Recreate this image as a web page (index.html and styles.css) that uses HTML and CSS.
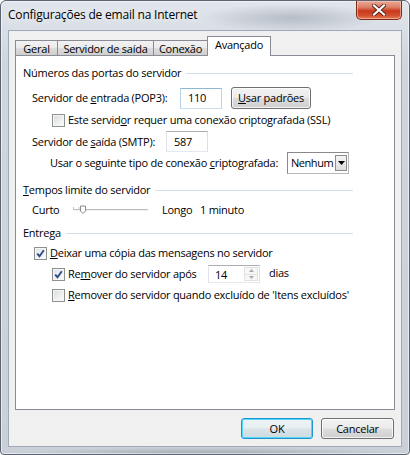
FILE: index.html
```html
<!DOCTYPE html>
<html lang="pt">
<head>
<meta charset="utf-8">
<title>Configurações de email na Internet</title>
<link rel="stylesheet" href="styles.css">
</head>
<body>
<div class="window">
  <div class="titlebar">
    <span class="title">Configurações de email na Internet</span>
    <div class="close">
      <svg width="14" height="12" viewBox="0 0 14 12">
        <path d="M2 1.5 L12 10.5 M12 1.5 L2 10.5" stroke="#5a2016" stroke-width="4" stroke-linecap="square"/>
        <path d="M2 1.5 L12 10.5 M12 1.5 L2 10.5" stroke="#ffffff" stroke-width="2.2" stroke-linecap="square"/>
      </svg>
    </div>
  </div>
  <div class="client">
    <div class="tabs">
      <div class="tab t1">Geral</div>
      <div class="tab t2">Servidor de saída</div>
      <div class="tab t3">Conexão</div>
      <div class="tab t4 active">Avançado</div>
    </div>
    <div class="panel">
      <div class="ghead gh1"><span>Números das portas do servidor</span><i class="rule"></i></div>

      <div class="row r-pop">
        <span class="lbl w-pop">Servidor de <u>e</u>ntrada (POP3):</span>
        <span class="field f-pop focus">110</span>
        <span class="btn b-def"><span><u>U</u>sar padrões</span></span>
      </div>

      <div class="row r-ssl">
        <span class="cb"></span>
        <span class="cbl">Este servid<u>o</u>r requer uma conexão criptografada (SSL)</span>
      </div>

      <div class="row r-smtp">
        <span class="lbl w-smtp">Servidor de <u>s</u>aída (SMTP):</span>
        <span class="field f-smtp">587</span>
      </div>

      <div class="row r-sel">
        <span class="lbl w-sel">Usar o seguinte tipo de conexão <u>c</u>riptografada:</span>
        <span class="select">
          <span class="sel-text">Nenhum</span>
          <span class="sel-btn">
            <svg width="7" height="4" viewBox="0 0 7 4"><path d="M0 0 H7 L3.5 4 Z" fill="#000"/></svg>
          </span>
        </span>
      </div>

      <div class="ghead gh2"><span><u>T</u>empos limite do servidor</span><i class="rule"></i></div>

      <div class="row r-slider">
        <span class="lbl w-curto">Curto</span>
        <span class="slider">
          <svg width="75" height="14" viewBox="0 0 75 14">
            <path d="M0.5 4 V6.5 H75" stroke="#bdbdbd" stroke-width="1" fill="none"/>
            <path d="M1 7.5 H75" stroke="#f2f2f2" stroke-width="1"/>
            <path d="M7.5 3 H12.5 V8 L10 10.5 L7.5 8 Z" fill="#fdfdfd" stroke="#8c8c8c" stroke-width="1"/>
            <path d="M6 4 V7" stroke="#c9c9c9" stroke-width="1"/>
          </svg>
        </span>
        <span class="lbl w-longo">Longo</span>
        <span class="lbl">1 minuto</span>
      </div>

      <div class="ghead gh3"><span>Entrega</span><i class="rule"></i></div>

      <div class="row r-deixar">
        <span class="cb checked">
          <svg width="9" height="9" viewBox="0 0 9 9"><path d="M1.2 4.6 L3.5 7.2 L7.8 1.2" stroke="#2e4a84" stroke-width="1.9" fill="none"/></svg>
        </span>
        <span class="cbl"><u>D</u>eixar uma cópia das mensagens no servidor</span>
      </div>

      <div class="row r-after">
        <span class="cb checked">
          <svg width="9" height="9" viewBox="0 0 9 9"><path d="M1.2 4.6 L3.5 7.2 L7.8 1.2" stroke="#2e4a84" stroke-width="1.9" fill="none"/></svg>
        </span>
        <span class="cbl w-after">Re<u>m</u>over do servidor após</span>
        <span class="spin">
          <span class="spin-text">14</span>
          <span class="spin-btns">
            <span class="spin-b"><svg width="5" height="3" viewBox="0 0 5 3"><path d="M0 3 H5 L2.5 0 Z" fill="#a9a9a9"/></svg></span>
            <span class="spin-b"><svg width="5" height="3" viewBox="0 0 5 3"><path d="M0 0 H5 L2.5 3 Z" fill="#a9a9a9"/></svg></span>
          </span>
        </span>
        <span class="lbl w-dias">dias</span>
      </div>

      <div class="row r-when">
        <span class="cb"></span>
        <span class="cbl"><u>R</u>emover do servidor quando excluído de 'Itens excluídos'</span>
      </div>
    </div>
    <div class="actions">
      <span class="btn b-ok">OK</span>
      <span class="btn b-cancel">Cancelar</span>
    </div>
  </div>
</div>
</body>
</html>
```
FILE: styles.css
```css
html, body {
  margin: 0;
  padding: 0;
  background: #ffffff;
}

body {
  width: 410px;
  height: 455px;
  overflow: hidden;
  font-family: "Open Sans", "Noto Sans", "DejaVu Sans", sans-serif;
  font-size: 11px;
  letter-spacing: -0.25px;
  color: #000;
}

.window {
  box-sizing: border-box;
  width: 410px;
  height: 455px;
  border: 1px solid #5b6470;
  border-radius: 6px 6px 4px 4px;
  padding: 0 7px 7px 7px;
  display: flex;
  flex-direction: column;
  background:
    radial-gradient(ellipse 90px 14px at 290px 17px, rgba(110, 120, 132, 0.35), rgba(110, 120, 132, 0) 100%),
    radial-gradient(ellipse 200px 8px at 205px 454px, rgba(120, 126, 134, 0.55), rgba(120, 126, 134, 0) 100%),
    linear-gradient(180deg, #e1e6ec 0px, #d9dfe6 29px, #cfd6de 60px, #c9d0d8 100%);
  box-shadow: inset 0 0 0 1px rgba(255, 255, 255, 0.55);
}

.titlebar {
  height: 29px;
  display: flex;
  align-items: flex-start;
  flex: none;
}

.title {
  flex: 1;
  font-size: 12px;
  letter-spacing: -0.2px;
  line-height: 16px;
  padding-top: 6px;
  color: #000;
  text-shadow: 0 0 6px rgba(255, 255, 255, 0.9);
}

.close {
  box-sizing: border-box;
  width: 46px;
  height: 19px;
  border: 1px solid #7c2a1c;
  border-top: none;
  border-radius: 0 0 5px 5px;
  background: linear-gradient(180deg, #e9a898 0%, #de7f66 35%, #c7391c 55%, #d3502f 80%, #e57a55 100%);
  box-shadow: inset 0 0 0 1px rgba(255, 210, 195, 0.55);
  display: flex;
  align-items: center;
  justify-content: center;
}

.client {
  flex: 1;
  border: 1px solid #a0aab6;
  background: #f0f0f0;
  padding: 5px 6px 0 6px;
  display: flex;
  flex-direction: column;
}

/* tabs */
.tabs {
  display: flex;
  align-items: flex-end;
  height: 20px;
  margin-bottom: -1px;
  position: relative;
  z-index: 1;
}

.tab {
  box-sizing: border-box;
  height: 15px;
  margin-bottom: 1px;
  border: 1px solid #898c95;
  border-bottom: none;
  background: linear-gradient(180deg, #f2f2f2 0%, #ebebeb 50%, #dddddd 51%, #cfcfcf 100%);
  display: flex;
  align-items: center;
  justify-content: center;
  line-height: 13px;
  padding-top: 1px;
}

.tab + .tab {
  margin-left: -1px;
}

.t1 { width: 43px; }
.t2 { width: 97px; }
.t3 { width: 55px; }
.t4 { width: 64px; }

.tab.active {
  height: 20px;
  margin-bottom: 0;
  background: #ffffff;
  align-items: flex-start;
  padding-top: 1px;
}

/* panel */
.panel {
  box-sizing: border-box;
  height: 355px;
  flex: none;
  border: 1px solid #898c95;
  background: #ffffff;
  padding: 9px 7px 0 7px;
  display: flex;
  flex-direction: column;
}

.ghead {
  width: 330px;
  height: 16px;
  display: flex;
  align-items: center;
  line-height: 16px;
}

.rule {
  flex: 1;
  height: 0;
  border-top: 1px solid #d5dfe5;
  margin-left: 5px;
  margin-top: 1px;
}

.gh2 { margin-top: 8px; }
.gh3 { margin-top: 7px; }

.row {
  display: flex;
  align-items: center;
  line-height: 16px;
}

.lbl { flex: none; white-space: nowrap; }

.r-pop { height: 22px; margin-top: 6px; padding-left: 9px; }
.w-pop { width: 148px; }

.r-ssl { height: 16px; margin-top: 3px; padding-left: 29px; }

.r-smtp { height: 21px; margin-top: 3px; padding-left: 9px; }
.w-smtp { width: 134px; }

.r-sel { height: 22px; margin-top: 0; padding-left: 27px; }
.w-sel { width: 237px; }

.r-slider { height: 16px; margin-top: 4px; padding-left: 9px; }
.w-curto { width: 41px; }
.w-longo { width: 38px; margin-left: 14px; }

.r-deixar { height: 16px; margin-top: 4px; padding-left: 11px; }
.r-after { height: 18px; margin-top: 4px; padding-left: 29px; }
.w-after { width: 140px; }
.w-dias { margin-left: 9px; margin-top: -3px; }
.r-when { height: 16px; margin-top: 4px; padding-left: 29px; }

/* inputs */
.field {
  box-sizing: border-box;
  width: 42px;
  height: 21px;
  border: 1px solid;
  border-color: #abadb3 #dbdfe6 #e3e9ef #e2e3ea;
  background: #fff;
  padding-left: 7px;
  display: flex;
  align-items: center;
  flex: none;
}

.field.focus {
  border-color: #8cb8d6 #b9d4e8 #c5ddee #b9d4e8;
}

.slider {
  width: 75px;
  height: 14px;
  display: flex;
  flex: none;
}

/* checkboxes */
.cb {
  box-sizing: border-box;
  width: 13px;
  height: 13px;
  flex: none;
  border: 1px solid #8e8f8f;
  background: linear-gradient(135deg, #d6d8db 0%, #eceef0 55%, #fbfbfb 100%);
  box-shadow: inset 0 0 0 1px #f6f6f6;
  display: flex;
  align-items: center;
  justify-content: center;
}

.cb.checked {
  background: linear-gradient(135deg, #dde2e8 0%, #eff2f5 55%, #fbfcfd 100%);
}

.cbl {
  margin-left: 3px;
  white-space: nowrap;
}

/* select */
.select {
  box-sizing: border-box;
  width: 62px;
  height: 22px;
  border: 1px solid;
  border-color: #8a8a8a #b9b9b9 #b9b9b9 #8a8a8a;
  background: #fff;
  display: flex;
  align-items: center;
  padding: 2px 1px 2px 2px;
  flex: none;
}

.sel-text {
  flex: 1;
  padding-left: 1px;
  letter-spacing: -0.45px;
  white-space: nowrap;
}

.sel-btn {
  box-sizing: border-box;
  width: 12px;
  height: 16px;
  border: 1px solid #8d8d8d;
  background: linear-gradient(180deg, #f5f5f5 0%, #dedede 100%);
  display: flex;
  align-items: center;
  justify-content: center;
  flex: none;
}

/* spin */
.spin {
  box-sizing: border-box;
  width: 52px;
  height: 18px;
  border: 1px solid;
  border-color: #abadb3 #dbdfe6 #e3e9ef #e2e3ea;
  background: #fff;
  display: flex;
  flex: none;
}

.spin-text {
  flex: 1;
  padding-left: 6px;
  line-height: 16px;
  padding-top: 1px;
}

.spin-btns {
  width: 15px;
  display: flex;
  flex-direction: column;
  padding: 1px 1px 1px 0;
  box-sizing: border-box;
}

.spin-b {
  flex: 1;
  box-sizing: border-box;
  border: 1px solid #e1e1e1;
  background: #f7f7f7;
  display: flex;
  align-items: center;
  justify-content: center;
}

.spin-b + .spin-b { margin-top: -1px; }

/* buttons */
.btn {
  box-sizing: border-box;
  height: 21px;
  border: 1px solid #707070;
  border-radius: 3px;
  background: linear-gradient(180deg, #f2f2f2 0%, #ebebeb 48%, #dddddd 52%, #cfcfcf 100%);
  box-shadow: inset 0 0 0 1px rgba(255, 255, 255, 0.75);
  display: flex;
  align-items: center;
  justify-content: center;
  flex: none;
}

.b-def {
  width: 80px;
  height: 22px;
  margin-left: 9px;
}

.actions {
  display: flex;
  justify-content: flex-end;
  gap: 8px;
  margin-top: 8px;
  margin-right: 1px;
}

.b-ok {
  width: 72px;
  border-color: #1f94cf;
  box-shadow: inset 0 0 0 1px #52d9f8;
  background: linear-gradient(180deg, #eef4f6 0%, #e6eef1 48%, #d9e3e8 52%, #cfdbe1 100%);
}

.b-cancel {
  width: 73px;
}

u {
  text-decoration: underline;
  text-underline-offset: 1px;
}
```
